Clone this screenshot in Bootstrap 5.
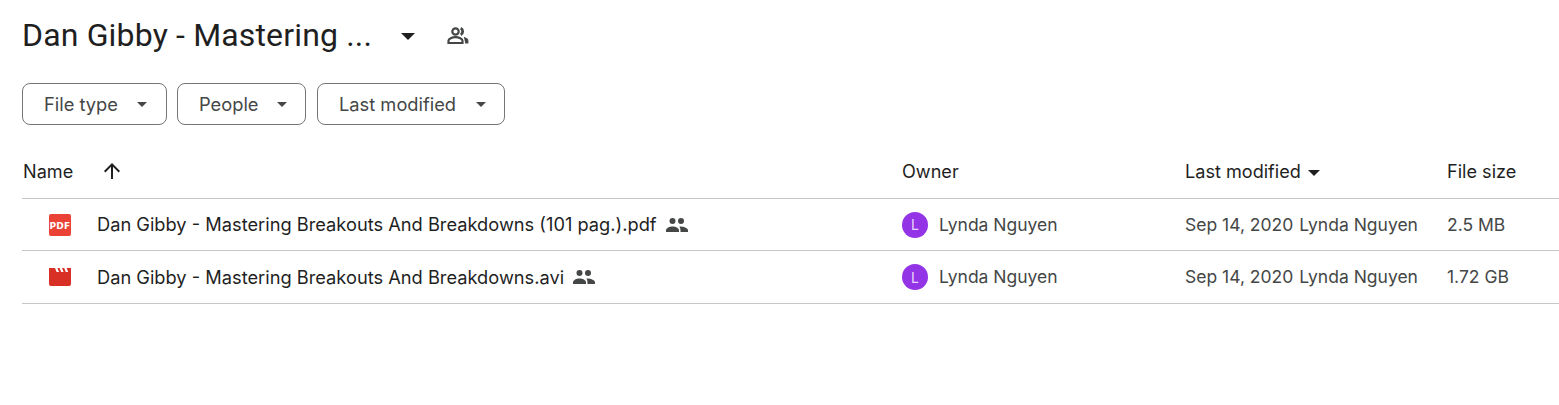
<!DOCTYPE html>
<html lang="en">
<head>
  <meta charset="UTF-8">
  <title>Dan Gibby - Mastering</title>
  <link href="https://cdn.jsdelivr.net/npm/bootstrap@5.3.3/dist/css/bootstrap.min.css" rel="stylesheet">
  <style>
    body { font-family: Inter, Roboto, "Liberation Sans", sans-serif; color: #1f1f1f; background: #fff; overflow: hidden; }
    .drive-page { padding: 0 0 0 22px; }
    .drive-head { height: 70px; }
    .drive-title { font-family: Roboto, "Liberation Sans", sans-serif; font-size: 32px; letter-spacing: .16px; line-height: 42px; font-weight: 400; width: 350px; margin: 0; color: #1f1f1f; white-space: nowrap; }
    .caret-big { width: 0; height: 0; border-left: 7.5px solid transparent; border-right: 7.5px solid transparent; border-top: 7.5px solid #1f1f1f; margin-left: 29px; margin-top: 2px; }
    .share-big { margin-left: 31px; margin-top: 1px; }
    .chips { height: 42px; margin-top: 13px; }
    .chip-btn { height: 42px; font-size: 18.3px; line-height: 24px; color: #444746; border: 1px solid #747775; border-radius: 8px; background: #fff; padding: 0 18px 0 21px; display: flex; align-items: center; }
    .chip-btn:hover { color: #444746; border-color: #747775; }
    .chip-caret { width: 0; height: 0; border-left: 5.5px solid transparent; border-right: 5.5px solid transparent; border-top: 5.5px solid #444746; }
    .ch-1 { width: 145px; justify-content: space-between; margin-right: 10px; padding-right: 19px; }
    .ch-2 { width: 129px; justify-content: space-between; margin-right: 11px; }
    .ch-3 { width: 188px; justify-content: space-between; }
    .files { table-layout: fixed; width: 1537px; margin: 25px 0 0; border-collapse: collapse; }
    .files th { font-weight: 400; font-size: 18.1px; height: 48px; color: #1f1f1f; padding: 0 0 5px; border-bottom: 1px solid #c7c7c7; vertical-align: middle; }
    .files td { font-size: 17.5px; height: 52.5px; padding: 1px 0 0; border-bottom: 1px solid #c7c7c7; color: #444746; vertical-align: middle; white-space: nowrap; }
    .files .col-first { padding-left: 1px; }
    .sort-up { margin-left: 27px; }
    .head-caret { width: 0; height: 0; border-left: 6.5px solid transparent; border-right: 6.5px solid transparent; border-top: 6.5px solid #1f1f1f; margin-left: 7px; display: inline-block; vertical-align: 2px; }
    .file-icon { margin-left: 26px; margin-right: 26px; flex: none; }
    .file-name { color: #1f1f1f; font-size: 18.25px; }
    .shared { margin-left: 9px; flex: none; }
    .avatar-dot { width: 26px; height: 26px; border-radius: 50%; background: #9334e6; color: #e9d6fb; font-size: 14px; margin-right: 11px; flex: none; }
    .modified-by { margin-left: 6px; }
  </style>
</head>
<body>
  <div class="drive-page">
    <div class="drive-head d-flex align-items-center">
      <h1 class="drive-title">Dan Gibby - Mastering ...</h1>
      <span class="caret-big"></span>
      <svg class="share-big" width="24" height="24" viewBox="0 0 24 24" fill="none" stroke="#444746" stroke-width="2.200">
        <circle cx="9.500" cy="7.500" r="3.200"/>
        <path d="M2.500 19v-2.200c0-2.200 3.600-3.600 7-3.600s7 1.400 7 3.600V19z"/>
        <path d="M14.700 4.300a3.600 3.600 0 0 1 0 6.400" stroke-width="2.800"/>
        <path d="M18 13.500c2.300.6 3.800 1.800 3.800 3.300V19H19.200" fill="#444746" stroke-width="1.200"/>
      </svg>
    </div>

    <div class="chips d-flex">
      <button type="button" class="btn chip-btn ch-1">File type <span class="chip-caret"></span></button>
      <button type="button" class="btn chip-btn ch-2">People <span class="chip-caret"></span></button>
      <button type="button" class="btn chip-btn ch-3">Last modified <span class="chip-caret"></span></button>
    </div>

    <table class="files">
      <colgroup>
        <col style="width: 880px">
        <col style="width: 283px">
        <col style="width: 262px">
        <col>
      </colgroup>
      <thead>
        <tr>
          <th class="col-first">
            <div class="d-flex align-items-center">
              Name
              <svg class="sort-up" width="24" height="24" viewBox="0 0 24 24" fill="#1f1f1f"><path d="M11 20V7.800l-5.600 5.600L4 12l8-8 8 8-1.400 1.400L13 7.800V20z"/></svg>
            </div>
          </th>
          <th>Owner</th>
          <th>Last modified<span class="head-caret"></span></th>
          <th>File size</th>
        </tr>
      </thead>
      <tbody>
        <tr>
          <td class="col-first">
            <div class="d-flex align-items-center">
              <svg class="file-icon" width="22" height="22" viewBox="0 0 22 22">
                <rect width="22" height="22" rx="2" fill="#ea4335"/>
                <text x="11" y="15" text-anchor="middle" font-family="DejaVu Sans, sans-serif" font-weight="700" font-size="9" letter-spacing=".3" fill="#fff">PDF</text>
              </svg>
              <span class="file-name">Dan Gibby - Mastering Breakouts And Breakdowns (101 pag.).pdf</span>
              <svg class="shared" width="22" height="22" viewBox="0 0 22 22" fill="#444746"><circle cx="6.500" cy="7" r="3"/><circle cx="15" cy="7" r="3"/><path d="M0 18v-1.500c0-2.500 3.500-4 6.500-4s6.500 1.500 6.500 4V18z"/><path d="M15 12.500c3 .2 7 1.500 7 4V18h-7.500v-1.500c0-1.500-.3-2.800-1-4z"/></svg>
            </div>
          </td>
          <td>
            <div class="d-flex align-items-center">
              <span class="avatar-dot d-flex align-items-center justify-content-center">L</span>Lynda Nguyen
            </div>
          </td>
          <td>Sep 14, 2020<span class="modified-by">Lynda Nguyen</span></td>
          <td>2.5 MB</td>
        </tr>
        <tr>
          <td class="col-first">
            <div class="d-flex align-items-center">
              <svg class="file-icon" width="22" height="22" viewBox="0 0 22 22">
                <path d="M0 2h6l1.600 4H10L8.400 2h2.200L12.200 6h2.400L13 2h2.200l1.600 4h2.400L17.600 2H22v16a2 2 0 0 1-2 2H2a2 2 0 0 1-2-2z" fill="#d93025"/>
              </svg>
              <span class="file-name">Dan Gibby - Mastering Breakouts And Breakdowns.avi</span>
              <svg class="shared" width="22" height="22" viewBox="0 0 22 22" fill="#444746"><circle cx="6.500" cy="7" r="3"/><circle cx="15" cy="7" r="3"/><path d="M0 18v-1.500c0-2.500 3.500-4 6.500-4s6.500 1.500 6.500 4V18z"/><path d="M15 12.500c3 .2 7 1.500 7 4V18h-7.500v-1.500c0-1.500-.3-2.800-1-4z"/></svg>
            </div>
          </td>
          <td>
            <div class="d-flex align-items-center">
              <span class="avatar-dot d-flex align-items-center justify-content-center">L</span>Lynda Nguyen
            </div>
          </td>
          <td>Sep 14, 2020<span class="modified-by">Lynda Nguyen</span></td>
          <td>1.72 GB</td>
        </tr>
      </tbody>
    </table>
  </div>
  <script src="https://cdn.jsdelivr.net/npm/bootstrap@5.3.3/dist/js/bootstrap.bundle.min.js"></script>
</body>
</html>
